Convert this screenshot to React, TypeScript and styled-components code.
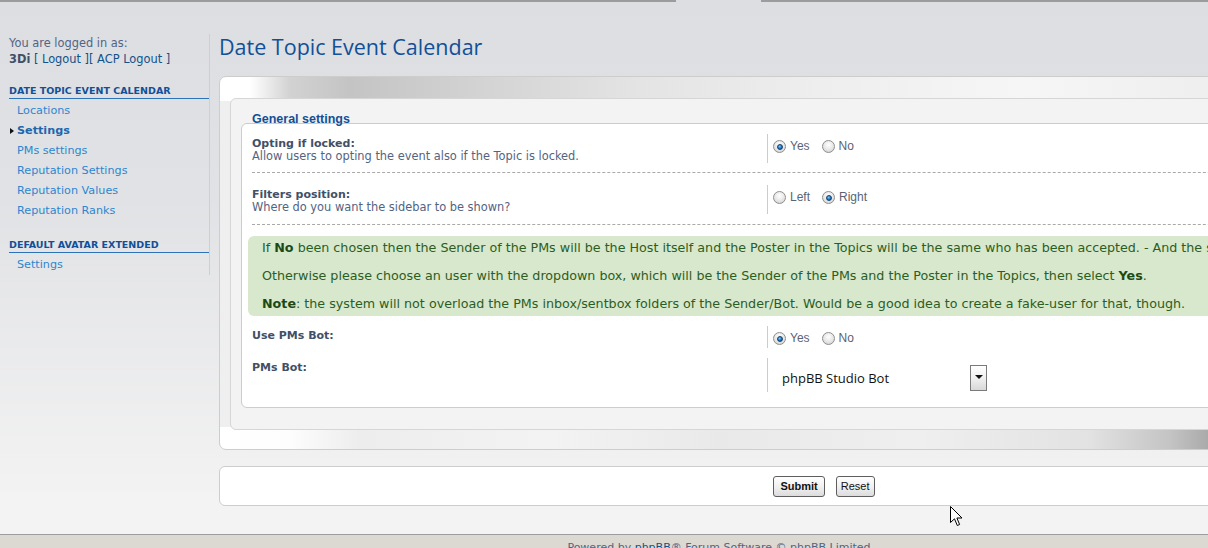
import styled, { createGlobalStyle } from "styled-components";

const GlobalStyle = createGlobalStyle`
  html, body {
    margin: 0;
    padding: 0;
  }
  body {
    width: 1208px;
    height: 548px;
    overflow: hidden;
    background: linear-gradient(#dcdee2 0, #e1e2e5 200px, #f3f3f3 500px);
    font-family: "DejaVu Sans", Verdana, sans-serif;
  }
`;

const Page = styled.div`
  position: relative;
  width: 1438px;
  min-height: 548px;
`;

const TopEdge = styled.div`
  display: flex;
  height: 2px;
`;

const EdgeLine = styled.div<{ $w?: number; $gap?: boolean }>`
  flex: ${(p) => (p.$w ? `0 0 ${p.$w}px` : "1")};
  background: ${(p) => (p.$gap ? "transparent" : "#9c9c9c")};
`;

const Body = styled.div`
  display: flex;
  align-items: flex-start;
  padding: 32px 9px 0;
`;

// sidebar
const Sidebar = styled.div`
  width: 201px;
  box-sizing: border-box;
  border-right: 1px solid #cfcfcf;
  padding-top: 1px;
`;

const LoggedIn = styled.div`
  font-size: 11.4px;
  line-height: 16px;
  color: #536482;

  b {
    color: #425067;
  }
  span {
    color: #105289;
  }
`;

const MenuHeader = styled.h3`
  margin: 17px 0 0;
  font-size: 9.5px;
  line-height: 14px;
  font-weight: bold;
  text-transform: uppercase;
  color: #115098;
  border-bottom: 1px solid #2b72b8;
`;

const Menu = styled.ul`
  list-style: none;
  margin: 2px 0 0;
  padding: 0;
`;

const MenuItem = styled.li<{ $active?: boolean }>`
  position: relative;
  padding-left: 8px;
  font-size: 11.2px;
  line-height: 20px;
  color: ${(p) => (p.$active ? "#1d67ad" : "#2e86cf")};
  font-weight: ${(p) => (p.$active ? "bold" : "normal")};

  &::before {
    content: "";
    display: ${(p) => (p.$active ? "block" : "none")};
    position: absolute;
    left: 1px;
    top: 7px;
    width: 0;
    height: 0;
    border-top: 3px solid transparent;
    border-bottom: 3px solid transparent;
    border-left: 4px solid #111;
  }
`;

// main column
const Main = styled.div`
  width: 1210px;
  margin-left: 9px;
`;

const Title = styled.h1`
  margin: 0 0 16px;
  font-family: "Open Sans", sans-serif;
  font-weight: normal;
  font-size: 21.5px;
  line-height: 26px;
  color: #115098;
`;

const Panel = styled.div`
  border: 1px solid #cdcdcd;
  border-radius: 7px;
  padding: 21px 10px 19px;
  background:
    linear-gradient(
        90deg,
        #fff 0,
        #fff 30px,
        #d2d2d2 70px,
        #c4c4c4 130px,
        #d3d3d3 260px,
        #e4e4e4 420px,
        #eeeeee 600px,
        #f6f6f6 800px,
        #eeeeee 1000px
      )
      top / 100% 24px no-repeat,
    linear-gradient(
        90deg,
        #fff 0,
        #fdfdfd 70px,
        #ededed 140px,
        #f3f3f3 330px,
        #e9e9e9 500px,
        #efefef 700px,
        #e2e2e2 870px,
        #c4c4c4 950px,
        #a2a2a2 1000px
      )
      bottom / 100% 22px no-repeat,
    #efefef;
`;

const Fieldset = styled.div`
  background: #f3f3f3;
  border: 1px solid #d6d6d6;
  border-radius: 6px;
  padding: 12px 10px 21px;
`;

const Legend = styled.div`
  position: relative;
  z-index: 1;
  margin-left: 11px;
  font-family: "Liberation Sans", Arial, sans-serif;
  font-weight: bold;
  font-size: 12.5px;
  line-height: 16px;
  color: #115098;
`;

const Box = styled.div`
  margin-top: -4px;
  background: #fff;
  border: 1px solid #cccccc;
  border-radius: 6px;
  padding: 0 10px;
`;

const Row = styled.div<{ $pt: number; $pb: number; $dashed?: boolean }>`
  display: flex;
  align-items: flex-start;
  padding: ${(p) => `${p.$pt}px 0 ${p.$pb}px`};
  border-bottom: ${(p) => (p.$dashed ? "1px dashed #a9a9a9" : "none")};
`;

const Term = styled.div`
  flex: 0 0 515px;
  padding-top: 3px;
  font-size: 11px;
  line-height: 13px;
`;

const Label = styled.div`
  font-weight: bold;
  color: #425067;
`;

const Desc = styled.div`
  font-size: 11.4px;
  color: #536482;
`;

const Field = styled.div<{ $h: number; $pl?: number }>`
  flex: 1;
  height: ${(p) => p.$h}px;
  border-left: 1px solid #cccccc;
  padding-left: ${(p) => p.$pl ?? 5}px;
  display: flex;
  align-items: flex-start;
`;

const RadioGroup = styled.div`
  display: flex;
  align-items: center;
  gap: 12px;
  padding-top: 6px;
`;

const RadioLabel = styled.label`
  display: flex;
  align-items: center;
  gap: 4px;
  font-family: "Liberation Sans", Arial, sans-serif;
  font-size: 12px;
  line-height: 13px;
  color: #5a6472;
`;

const RadioDot = styled.span<{ $on?: boolean }>`
  width: 13px;
  height: 13px;
  box-sizing: border-box;
  border-radius: 50%;
  border: 1px solid #8e8e8e;
  background: radial-gradient(circle at 50% 35%, #ffffff 0, #e6e6e6 55%, #c9c9c9 100%);
  display: flex;
  align-items: center;
  justify-content: center;

  &::after {
    content: "";
    display: ${(p) => (p.$on ? "block" : "none")};
    width: 6px;
    height: 6px;
    box-sizing: border-box;
    border-radius: 50%;
    border: 1px solid #163f66;
    background: radial-gradient(circle at 40% 35%, #7cc8ff 0, #1c78c4 55%, #0b3f74 100%);
  }
`;

const Notice = styled.div`
  margin: 11px -4px 0;
  padding: 4px 14px;
  background: #d7e8cd;
  border-radius: 6px;
  font-size: 12.7px;
  line-height: 16px;
  color: #2c5d22;
  white-space: nowrap;
  overflow: hidden;

  p {
    margin: 0 0 12px;
  }
  p:last-child {
    margin: 0;
  }
  b {
    color: #1d4a14;
  }
`;

const Select = styled.div`
  margin-top: 7px;
  width: 205px;
  height: 26px;
  display: flex;
  align-items: center;
  justify-content: space-between;
  font-family: "Open Sans", sans-serif;
  font-size: 13px;
  color: #111;
`;

const SelectArrow = styled.span`
  width: 17px;
  height: 26px;
  box-sizing: border-box;
  border: 1px solid #7a7a7a;
  background: linear-gradient(#ffffff 0, #f0f0f0 50%, #d8d8d8 100%);
  display: flex;
  justify-content: center;
  padding-top: 9px;

  &::after {
    content: "";
    width: 0;
    height: 0;
    border-left: 4px solid transparent;
    border-right: 4px solid transparent;
    border-top: 4px solid #111;
  }
`;

const ActionBar = styled.div`
  margin-top: 16px;
  height: 40px;
  box-sizing: border-box;
  background: #fff;
  border: 1px solid #cdcdcd;
  border-radius: 6px;
  display: flex;
  align-items: center;
  justify-content: center;
  gap: 11px;
`;

const Button = styled.button<{ $primary?: boolean }>`
  height: 21px;
  padding: 0 ${(p) => (p.$primary ? 6 : 4)}px;
  border: 1px solid #5e5e5e;
  border-radius: 3px;
  background: linear-gradient(#ffffff 0, #efefef 55%, #dcdcdc 100%);
  font-family: "Liberation Sans", Arial, sans-serif;
  font-size: 11px;
  font-weight: ${(p) => (p.$primary ? "bold" : "normal")};
  color: #111;
`;

const Footer = styled.div`
  margin-top: 28px;
  border-top: 1px solid #9d9d9d;
  background: #dcd9d3;
  padding-top: 6px;
  height: 20px;
  text-align: center;
  font-size: 11px;
  line-height: 14px;
  color: #536482;

  a {
    color: #105289;
    text-decoration: underline;
  }
`;

const Cursor = styled.svg`
  position: absolute;
  left: 950px;
  top: 506px;
`;

const items = [
  "Locations",
  "Settings",
  "PMs settings",
  "Reputation Settings",
  "Reputation Values",
  "Reputation Ranks",
];

const Radios = ({ options, checked }: { options: string[]; checked: number }) => (
  <RadioGroup>
    {options.map((o, i) => (
      <RadioLabel key={o}>
        <RadioDot $on={i === checked} />
        {o}
      </RadioLabel>
    ))}
  </RadioGroup>
);

export default function App() {
  return (
    <Page>
      <GlobalStyle />
      <TopEdge>
        <EdgeLine $w={676} />
        <EdgeLine $w={85} $gap />
        <EdgeLine />
      </TopEdge>
      <Body>
        <Sidebar>
          <LoggedIn>
            You are logged in as:
            <br />
            <b>3Di</b> <span>[ Logout ][ ACP Logout ]</span>
          </LoggedIn>
          <MenuHeader>Date Topic Event Calendar</MenuHeader>
          <Menu>
            {items.map((it, i) => (
              <MenuItem key={it} $active={i === 1}>
                {it}
              </MenuItem>
            ))}
          </Menu>
          <MenuHeader>Default Avatar Extended</MenuHeader>
          <Menu>
            <MenuItem>Settings</MenuItem>
          </Menu>
        </Sidebar>

        <Main>
          <Title>Date Topic Event Calendar</Title>
          <Panel>
            <Fieldset>
              <Legend>General settings</Legend>
              <Box>
                <Row $pt={10} $pb={9} $dashed>
                  <Term>
                    <Label>Opting if locked:</Label>
                    <Desc>Allow users to opting the event also if the Topic is locked.</Desc>
                  </Term>
                  <Field $h={29}>
                    <Radios options={["Yes", "No"]} checked={0} />
                  </Field>
                </Row>
                <Row $pt={12} $pb={10} $dashed>
                  <Term>
                    <Label>Filters position:</Label>
                    <Desc>Where do you want the sidebar to be shown?</Desc>
                  </Term>
                  <Field $h={29}>
                    <Radios options={["Left", "Right"]} checked={1} />
                  </Field>
                </Row>
                <Notice>
                  <p>
                    If <b>No</b> been chosen then the Sender of the PMs will be the Host itself and the
                    Poster in the Topics will be the same who has been accepted. - And the sender of the
                    PMs will be the Poster.
                  </p>
                  <p>
                    Otherwise please choose an user with the dropdown box, which will be the Sender of
                    the PMs and the Poster in the Topics, then select <b>Yes</b>.
                  </p>
                  <p>
                    <b>Note</b>: the system will not overload the PMs inbox/sentbox folders of the
                    Sender/Bot. Would be a good idea to create a fake-user for that, though.
                  </p>
                </Notice>
                <Row $pt={10} $pb={0}>
                  <Term>
                    <Label>Use PMs Bot:</Label>
                  </Term>
                  <Field $h={22}>
                    <Radios options={["Yes", "No"]} checked={0} />
                  </Field>
                </Row>
                <Row $pt={10} $pb={15}>
                  <Term>
                    <Label>PMs Bot:</Label>
                  </Term>
                  <Field $h={34} $pl={14}>
                    <Select>
                      phpBB Studio Bot
                      <SelectArrow />
                    </Select>
                  </Field>
                </Row>
              </Box>
            </Fieldset>
          </Panel>
          <ActionBar>
            <Button $primary>Submit</Button>
            <Button>Reset</Button>
          </ActionBar>
        </Main>
      </Body>
      <Footer>
        Powered by <a>phpBB</a>® Forum Software © phpBB Limited
      </Footer>
      <Cursor width="13" height="21" viewBox="0 0 13 21">
        <path
          d="M0.5 0.5 L0.5 16.5 L4.5 12.8 L7.3 19.5 L9.6 18.5 L6.9 12 L12 12 Z"
          fill="#fff"
          stroke="#000"
          strokeWidth="1"
          strokeLinejoin="miter"
        />
      </Cursor>
    </Page>
  );
}
